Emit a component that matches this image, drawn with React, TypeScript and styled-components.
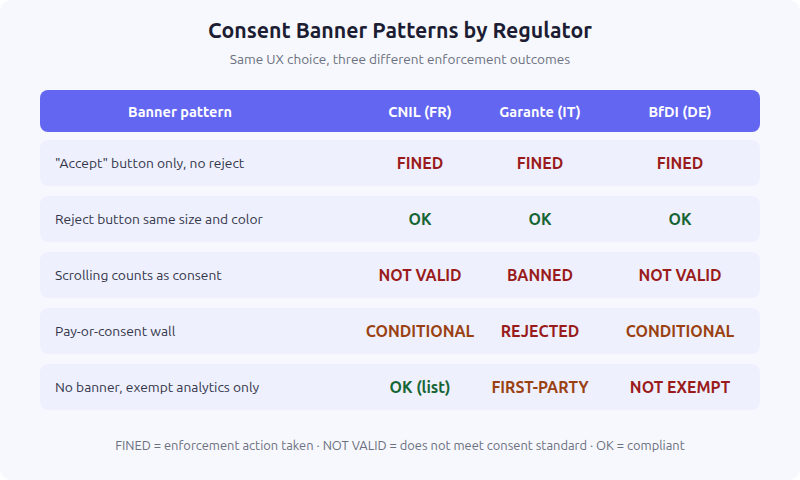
import React from "react";
import styled, { createGlobalStyle } from "styled-components";

const Global = createGlobalStyle`
  html, body { margin: 0; padding: 0; background: #ffffff; }
  body { font-family: Ubuntu, "Noto Sans", sans-serif; }
`;

const Card = styled.div`
  width: 800px;
  height: 480px;
  box-sizing: border-box;
  background: #f7f8fd;
  border-radius: 12px;
  padding: 16px 40px 0;
  display: flex;
  flex-direction: column;
  align-items: stretch;
`;

const Title = styled.h1`
  margin: 0;
  font-size: 21.3px;
  font-weight: 700;
  color: #1c1d33;
  text-align: center;
  line-height: 28px;
`;

const Subtitle = styled.p`
  margin: 6px 0 0;
  font-size: 13.6px;
  color: #6b7080;
  text-align: center;
  line-height: 18px;
`;

const Grid = styled.div`
  display: grid;
  grid-template-columns: 320px 120px 120px 160px;
`;

const Header = styled(Grid)`
  margin-top: 22px;
  height: 42px;
  background: #6366f1;
  border-radius: 8px;
  align-items: center;
  color: #ffffff;
  font-size: 14.5px;
  font-weight: 700;
`;

const HeadCell = styled.div<{ $first?: boolean }>`
  text-align: center;
  padding-right: ${(p) => (p.$first ? "40px" : "0")};
`;

const Rows = styled.div`
  display: flex;
  flex-direction: column;
  gap: 10px;
  margin-top: 8px;
`;

const Row = styled(Grid)`
  height: 46px;
  background: #eef0fd;
  border-radius: 8px;
  align-items: center;
`;

const Label = styled.div`
  padding-left: 15px;
  font-size: 13.8px;
  color: #33354a;
`;

type Tone = "bad" | "good" | "warn";

const toneColor: Record<Tone, string> = {
  bad: "#991b1b",
  good: "#166534",
  warn: "#9a4112",
};

const Status = styled.div<{ $tone: Tone }>`
  text-align: center;
  font-size: 15.8px;
  font-weight: 700;
  color: ${(p) => toneColor[p.$tone]};
`;

const Footer = styled.p`
  margin: 28px 0 0;
  text-align: center;
  font-size: 12.9px;
  color: #6b7080;
`;

const rows: { label: string; cells: [string, Tone][] }[] = [
  { label: '"Accept" button only, no reject', cells: [["FINED", "bad"], ["FINED", "bad"], ["FINED", "bad"]] },
  { label: "Reject button same size and color", cells: [["OK", "good"], ["OK", "good"], ["OK", "good"]] },
  { label: "Scrolling counts as consent", cells: [["NOT VALID", "bad"], ["BANNED", "bad"], ["NOT VALID", "bad"]] },
  { label: "Pay-or-consent wall", cells: [["CONDITIONAL", "warn"], ["REJECTED", "bad"], ["CONDITIONAL", "warn"]] },
  { label: "No banner, exempt analytics only", cells: [["OK (list)", "good"], ["FIRST-PARTY", "warn"], ["NOT EXEMPT", "bad"]] },
];

export default function App() {
  return (
    <>
      <Global />
      <Card>
        <Title>Consent Banner Patterns by Regulator</Title>
        <Subtitle>Same UX choice, three different enforcement outcomes</Subtitle>
        <Header>
          <HeadCell $first>Banner pattern</HeadCell>
          <HeadCell>CNIL (FR)</HeadCell>
          <HeadCell>Garante (IT)</HeadCell>
          <HeadCell>BfDI (DE)</HeadCell>
        </Header>
        <Rows>
          {rows.map((r) => (
            <Row key={r.label}>
              <Label>{r.label}</Label>
              {r.cells.map(([t, tone], i) => (
                <Status key={i} $tone={tone}>{t}</Status>
              ))}
            </Row>
          ))}
        </Rows>
        <Footer>FINED = enforcement action taken · NOT VALID = does not meet consent standard · OK = compliant</Footer>
      </Card>
    </>
  );
}
